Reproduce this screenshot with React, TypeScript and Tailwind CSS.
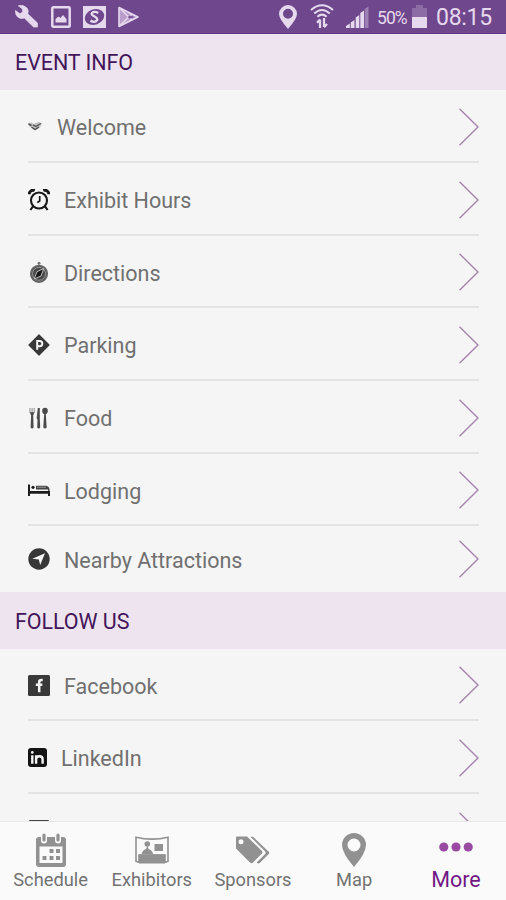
import type { ReactNode } from 'react';
import clsx from 'clsx';

type Item = {
    label: string;
    icon: ReactNode;
    row: string;
    text: string;
    divider?: boolean;
};

const WelcomeIcon = () => (
    <svg width="14" height="10" viewBox="0 0 14 10" className="mt-[-2px]">
        <path d="M0 2 3.5 1.5 6 3 9.5 1 14 2 12.5 5.5 10 8 7.5 9.5 4.5 8 1.5 5.5Z" fill="#c4c4c4" />
        <path d="M.5 3 3.5 4.5M5 3.8 8 5.5 12.8 2.5M3.5 6 7 8.5 11 6" stroke="#505050" strokeWidth="1.4" fill="none" />
    </svg>
);

const ClockIcon = () => (
    <svg width="22" height="22" viewBox="0 0 22 22" fill="none" stroke="#171717">
        <circle cx="11" cy="11.5" r="8" strokeWidth="2.1" />
        <path d="M1.2 5.2A4 4 0 0 1 6.7 1.5M20.8 5.2A4 4 0 0 0 15.3 1.5" strokeWidth="2.9" />
        <path d="M5 17.3 2.4 21M17 17.3 19.6 21" strokeWidth="2.1" />
        <path d="M11.7 7V12L9.3 13.5" strokeWidth="1.7" />
    </svg>
);

const CompassIcon = () => (
    <svg width="22" height="22" viewBox="0 0 22 22">
        <circle cx="11" cy="2.3" r="1.5" fill="#777" />
        <circle cx="11" cy="12.8" r="8.2" fill="#484848" stroke="#666" strokeWidth="1.8" />
        <circle cx="11" cy="12.8" r="6.5" fill="none" stroke="#aaa" strokeWidth=".8" />
        <path d="M15.8 7.5 13 15 6.2 18 9 10.7Z" fill="#191919" stroke="#ccc" strokeWidth=".9" />
    </svg>
);

const ParkingIcon = () => (
    <svg width="22" height="22" viewBox="0 0 22 22">
        <path d="M11 1 21 11 11 21 1 11Z" fill="#383838" stroke="#383838" strokeWidth="1.2" strokeLinejoin="round" />
        <path d="M9.2 15.8V7H11.7A2.6 2.6 0 0 1 11.7 12.2H9.2" fill="none" stroke="#f5f5f5" strokeWidth="2" />
    </svg>
);

const FoodIcon = () => (
    <svg width="22" height="22" viewBox="0 0 22 22" fill="#4a4a4a">
        <path d="M2 1V6M4.1 1V6M6.2 1V6" stroke="#8a8a8a" strokeWidth="1" />
        <path d="M1.8 5.3H6.4L5.2 8.4 5.6 20.5Q4.1 22.3 2.6 20.5L3.1 8.4Z" />
        <path d="M9.8 1H11.8V12L12.2 20.5Q10.8 22.3 9.2 20.5L9.5 13 8.7 11Z" />
        <ellipse cx="17" cy="3.9" rx="2.8" ry="3.1" />
        <path d="M16.2 6.5H17.8L18.7 20.5Q17 22.3 15.3 20.5Z" />
    </svg>
);

const BedIcon = () => (
    <svg width="22" height="14" viewBox="0 0 22 14" fill="#1c1c1c">
        <path d="M0 1.5H2V8H22V13H20V10.7H2V13H0Z" />
        <circle cx="5" cy="4.3" r="1.6" />
        <path d="M8 2.7H17.5Q21 2.7 21.5 6.4V8H20V6.4H8Z" fill="#444" />
        <path d="M9 4.2H18" stroke="#999" />
    </svg>
);

const AttractionsIcon = () => (
    <svg width="22" height="22" viewBox="0 0 22 22">
        <circle cx="11" cy="11" r="10.7" fill="#373737" />
        <path d="M17 5.2 12.2 17 10.8 11.4 4.3 10.7Z" fill="#f5f5f5" />
    </svg>
);

const FacebookIcon = () => (
    <svg width="22" height="21" viewBox="0 0 22 21">
        <rect width="22" height="21" rx="1.5" fill="#393939" />
        <path d="M14.7 5H13.5Q11.2 5 11.2 7V17.2M7.8 9.8H14.3" fill="none" stroke="#f5f5f5" strokeWidth="2.5" />
    </svg>
);

const LinkedInIcon = () => (
    <svg width="19" height="19" viewBox="0 0 19 19">
        <rect width="19" height="19" rx="3" fill="#141414" />
        <path d="M4.3 7.3V15.7M8.1 7.3V15.7M8.1 11Q8.5 8.3 11.4 8.3 14.6 8.3 14.6 11.3V15.7" fill="none" stroke="#f5f5f5" strokeWidth="2.4" />
        <circle cx="4.3" cy="4.4" r="1.4" fill="#f5f5f5" />
    </svg>
);

const eventItems: Item[] = [
    { label: 'Welcome', icon: <WelcomeIcon />, row: 'h-[73px] pt-[2px]', text: 'ml-[15px]' },
    { label: 'Exhibit Hours', icon: <ClockIcon />, row: 'h-[73px] pt-[2px]', text: 'ml-[14px]' },
    { label: 'Directions', icon: <CompassIcon />, row: 'h-[72px] pt-[2px]', text: 'ml-[14px]' },
    { label: 'Parking', icon: <ParkingIcon />, row: 'h-[73px] pt-[2px]', text: 'ml-[14px]' },
    { label: 'Food', icon: <FoodIcon />, row: 'h-[73px] pt-[2px]', text: 'ml-[14px]' },
    { label: 'Lodging', icon: <BedIcon />, row: 'h-[72px] pt-[2px]', text: 'ml-[14px]' },
    { label: 'Nearby Attractions', icon: <AttractionsIcon />, row: 'h-[66px]', text: 'ml-[14px]', divider: false },
];

const socialItems: Item[] = [
    { label: 'Facebook', icon: <FacebookIcon />, row: 'h-[72px] pt-[2px]', text: 'ml-[14px]' },
    { label: 'LinkedIn', icon: <LinkedInIcon />, row: 'h-[73px] pt-[2px]', text: 'ml-[14px]' },
];

const Chevron = () => (
    <svg width="22" height="38" viewBox="0 0 22 38" fill="none" className="ml-auto mr-[-1px]">
        <path d="M1.5 .8 20 19 1.5 37.2" stroke="#a684ad" strokeWidth="1.4" />
    </svg>
);

function SectionHeader({ title, className }: { title: string; className: string }) {
    return (
        <h2 className={clsx('flex shrink-0 items-center bg-[#ede4f0] pt-[3px] pl-[15px] text-[21.5px] tracking-[-0.08px] text-[#431559]', className)}>
            {title}
        </h2>
    );
}

function Row({ item }: { item: Item }) {
    return (
        <li
            className={clsx(
                'mr-[27px] ml-[28px] flex shrink-0 items-center',
                item.row,
                item.divider !== false && 'border-b-2 border-[#e3e3e3]',
            )}
        >
            {item.icon}
            <span className={clsx('mt-[3px] text-[21.5px] leading-none text-[#707070]', item.text)}>{item.label}</span>
            <Chevron />
        </li>
    );
}

function StatusBar() {
    return (
        <header className="flex h-[34px] shrink-0 items-center border-b border-[#643386] bg-[#6f478d] pl-[15px] text-[#e6d9ee]">
            <svg width="23" height="23" viewBox="0 0 23 23" fill="currentColor">
                <path d="M.5 5.5 5 8.8 7.8 6.8 7 3.5 3.2 .8Q8.5-.7 12 3 14 6 12.8 8.8L22.5 18V22H18.5L9.3 12.9Q6 14.5 2.7 12 0 9.5.5 5.5Z" stroke="currentColor" strokeWidth=".7" />
            </svg>
            <svg width="20" height="22" viewBox="0 0 20 22" className="ml-[13px]">
                <rect x="1.3" y="1.3" width="17.4" height="19.4" rx="1" fill="none" stroke="currentColor" strokeWidth="2.5" />
                <path d="M4.5 16.5V13L7.5 10.5 9.3 12 12 9 15.5 13V16.5Z" fill="currentColor" />
            </svg>
            <svg width="23" height="22" viewBox="0 0 23 22" className="ml-[12px]">
                <rect width="23" height="22" fill="currentColor" />
                <ellipse cx="11.5" cy="11" rx="9.9" ry="7.6" fill="#6f478d" transform="rotate(-20 11.5 11)" />
                <path d="M15.3 7Q11.5 4.8 9 6.9C6.6 10 15.5 10.4 14.2 14 12.3 16.7 9.5 16 7.5 14.5" fill="none" stroke="currentColor" strokeWidth="2.3" />
            </svg>
            <svg width="21" height="22" viewBox="0 0 21 22" className="ml-[12px]" fill="none" stroke="currentColor">
                <path d="M1 1.5V20.5L20 11Z" fill="#b99dcb" strokeWidth="1.6" strokeLinejoin="round" />
                <path d="M1.5 2 14 14.2M1.5 20 14 7.8" strokeWidth="1.6" />
                <path d="M3 6V16L8.2 11Z" fill="#b99dcb" stroke="none" />
                <path d="M11.5 9.5 17 11 11.5 12.8 9.8 11Z" fill="#7b5299" stroke="none" />
            </svg>
            <svg width="18" height="24" viewBox="0 0 18 24" className="ml-[140px]">
                <path d="M9 24Q0 13.5 0 9A9 9 0 0 1 18 9Q18 13.5 9 24ZM9 3.8A5 5 0 1 0 9 13.8 5 5 0 1 0 9 3.8Z" fill="currentColor" />
            </svg>
            <svg width="24" height="25" viewBox="0 0 24 25" className="ml-[13px]" fill="none" stroke="currentColor" strokeWidth="2">
                <path d="M1 6Q12-3.5 23 6M4.2 9.5Q12 2.5 19.8 9.5M7.4 12.8Q12 8.5 16.6 12.8" />
                <path d="M10 24V15.5M7 18.7 10 15.5M14 14V23M17 20 14 23.2" strokeWidth="2.3" />
            </svg>
            <svg width="24" height="22" viewBox="0 0 24 22" className="ml-[12px]" fill="currentColor">
                <path d="M0 20 3.8 17.5V22H0ZM4.7 16.5 8.5 14V22H4.7ZM9.7 11.5 13.3 9V22H9.7ZM14.3 7 18 4.5V22H14.3Z" />
                <path d="M18.7 3 22.5 .5V22H18.7Z" opacity=".4" />
            </svg>
            <span className="mt-[3px] ml-[7px] w-[31px] text-[17.5px] tracking-[-0.9px]">50%</span>
            <svg width="16" height="23" viewBox="0 0 16 23" className="ml-[4px]" fill="currentColor">
                <path d="M0 3H4V0H11V3H15V12H0Z" opacity=".25" />
                <path d="M0 12H15V23H0Z" />
            </svg>
            <span className="mt-[4px] ml-[8px] text-[23px] tracking-[-0.3px]">08:15</span>
        </header>
    );
}

const ScheduleIcon = () => (
    <svg width="30" height="34" viewBox="0 0 30 34">
        <path d="M3 4H27Q30 4 30 7V30.5Q30 34 27 34H3Q0 34 0 30.5V7Q0 4 3 4Z" fill="#919191" />
        <rect x="3.5" y="13.5" width="23" height="16.5" fill="#fafafa" />
        <path d="M8 3V7.5M22 3V7.5" stroke="#fafafa" strokeWidth="6" strokeLinecap="round" />
        <path d="M8 2V7M22 2V7" stroke="#919191" strokeWidth="3.2" strokeLinecap="round" />
        <path d="M13.5 16H17.5V20H13.5ZM20 16H24V20H20ZM6.5 23H10.5V27H6.5ZM13.5 23H17.5V27H13.5ZM20 23H24V27H20Z" fill="#919191" />
    </svg>
);

const ExhibitorsIcon = () => (
    <svg width="34" height="28" viewBox="0 0 34 28" fill="#919191">
        <path d="M1 1.2Q17 5 33 1.2V25.5L30 26.3V19H4V26.3L1 25.5Z" fill="none" stroke="#919191" strokeWidth="1.6" />
        <path d="M4 18.5H30V27.5H4Z" />
        <circle cx="12.3" cy="8" r="2.8" />
        <path d="M6.5 18Q7.5 14 11 13L12.3 10 13.6 13Q17 14 18.2 18ZM19.5 8H28V15H19.5Z" />
    </svg>
);

const SponsorsIcon = () => (
    <svg width="35" height="28" viewBox="0 0 35 28" fill="#919191">
        <path d="M1.5.5H12L27 15Q28 16.3 27 17.5L18 26.5Q16.5 28 15 26.5L1 12.5V1.2ZM6 3.3A2.5 2.5 0 1 0 6 8.3 2.5 2.5 0 1 0 6 3.3Z" />
        <path d="M15.5 .7H18L34 16Q34.7 17 33.8 18L24.7 26.9Q23.7 27.8 22.2 27L21.8 26.2 30.2 17.9Q31.3 16.6 30 15.2Z" />
    </svg>
);

const MapIcon = () => (
    <svg width="24" height="34" viewBox="0 0 24 34">
        <path d="M12 34Q0 20 0 12A12 12 0 0 1 24 12Q24 20 12 34ZM12 5.5A6.5 6.5 0 1 0 12 18.5 6.5 6.5 0 1 0 12 5.5Z" fill="#919191" />
    </svg>
);

const MoreIcon = () => (
    <svg width="34" height="34" viewBox="0 0 34 34" fill="#984ba1">
        <circle cx="4.8" cy="13" r="4.6" />
        <circle cx="17" cy="13" r="4.6" />
        <circle cx="29.2" cy="13" r="4.6" />
    </svg>
);

const tabs = [
    { label: 'Schedule', icon: <ScheduleIcon /> },
    { label: 'Exhibitors', icon: <ExhibitorsIcon /> },
    { label: 'Sponsors', icon: <SponsorsIcon /> },
    { label: 'Map', icon: <MapIcon /> },
    { label: 'More', icon: <MoreIcon />, active: true },
];

function TabBar() {
    return (
        <nav className="grid h-[79px] shrink-0 grid-cols-5 border-t border-[#e9e9e9] bg-[#fafafa]">
            {tabs.map((tab) => (
                <div key={tab.label} className={clsx('flex flex-col items-center', tab.active ? 'pt-[11px] pl-px' : 'pt-[10px]')}>
                    <div className="flex h-[35px] items-center">{tab.icon}</div>
                    <span
                        className={clsx(
                            'leading-[22px]',
                            tab.active ? 'mt-px text-[21.5px] text-[#711885]' : 'mt-[2px] text-[18.3px] text-[#727272]',
                        )}
                    >
                        {tab.label}
                    </span>
                </div>
            ))}
        </nav>
    );
}

export default function App() {
    return (
        <div className="flex h-[900px] w-[506px] flex-col overflow-hidden bg-[#f5f5f5] font-[Roboto,sans-serif]">
            <StatusBar />
            <main className="flex min-h-0 flex-1 flex-col overflow-hidden">
                <SectionHeader title="EVENT INFO" className="h-[56px]" />
                <ul className="flex shrink-0 flex-col">
                    {eventItems.map((item) => (
                        <Row key={item.label} item={item} />
                    ))}
                </ul>
                <SectionHeader title="FOLLOW US" className="h-[57px]" />
                <ul className="flex shrink-0 flex-col">
                    {socialItems.map((item) => (
                        <Row key={item.label} item={item} />
                    ))}
                    <li className="mr-[27px] ml-[28px] flex h-[73px] items-start pt-[18px]">
                        <div className="mt-[8px] ml-[1px] h-[18px] w-[20px] rounded-[1px] bg-[#444]" />
                        <Chevron />
                    </li>
                </ul>
            </main>
            <TabBar />
        </div>
    );
}
